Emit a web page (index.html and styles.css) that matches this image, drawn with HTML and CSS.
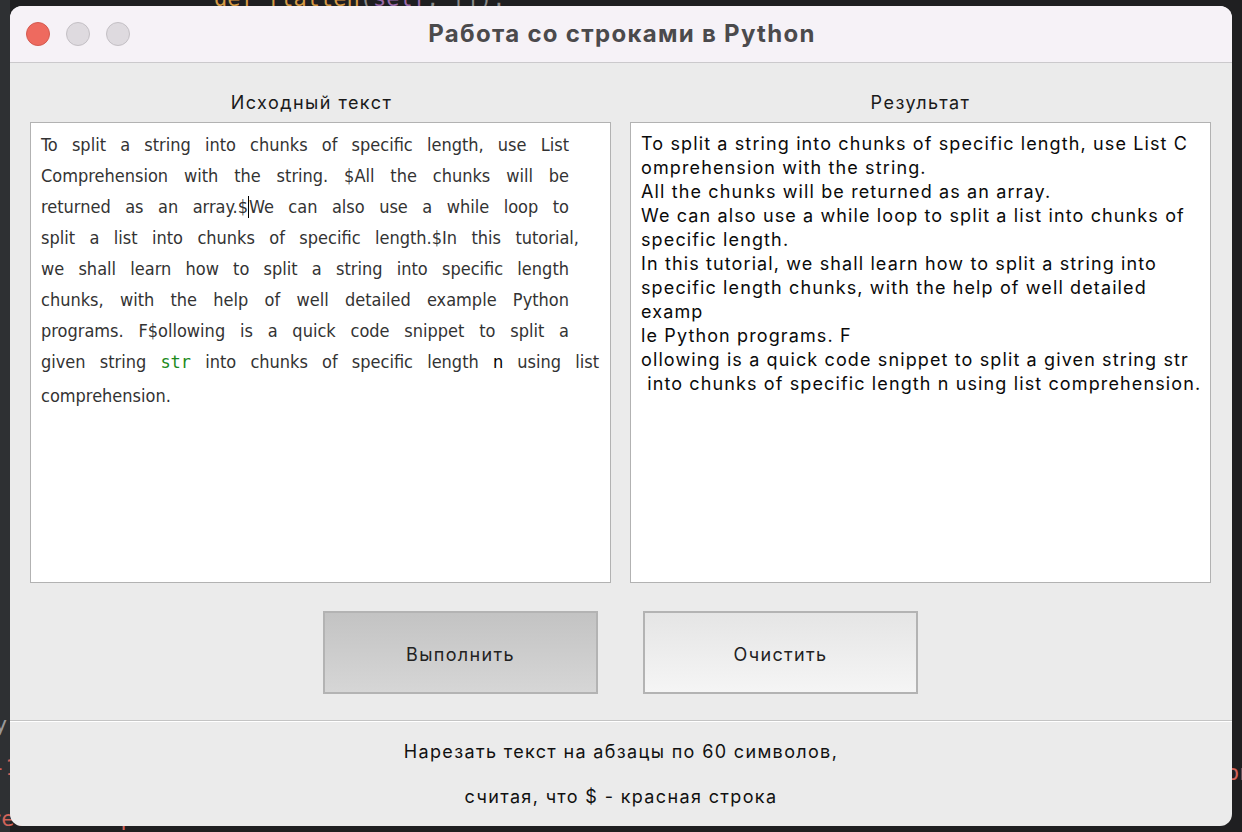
FILE: index.html
```html
<!DOCTYPE html>
<html lang="ru">
<head>
<meta charset="utf-8">
<title>Работа со строками в Python</title>
<link rel="stylesheet" href="styles.css">
</head>
<body>
<div class="desktop">
  <div class="bg-code">
    <div class="code-top"><span class="kw">def</span> <span class="fn">flatten</span>(<span class="self">self</span>, []):</div>
    <div class="code-mid">y-</div>
    <div class="code-red1">-1</div>
    <div class="code-red2">reet skob profile</div>
    <div class="code-right">on</div>
  </div>

  <div class="window">
    <div class="titlebar">
      <div class="lights">
        <span class="light red"></span>
        <span class="light grey"></span>
        <span class="light grey"></span>
      </div>
      <div class="title">Работа со строками в Python</div>
    </div>

    <div class="content">
      <div class="panes">
        <div class="pane">
          <div class="label src">Исходный текст</div>
          <div class="box source">
            <div class="ln">To split a string into chunks of specific length, use List</div>
            <div class="ln">Comprehension with the string. $All the chunks will be</div>
            <div class="ln">returned as an array.$<span class="caret"></span>We can also use a while loop to</div>
            <div class="ln w2">split a list into chunks of specific length.$In this tutorial,</div>
            <div class="ln">we shall learn how to split a string into specific length</div>
            <div class="ln">chunks, with the help of well detailed example Python</div>
            <div class="ln">programs. F$ollowing is a quick code snippet to split a</div>
            <div class="ln w3">given string <span class="code">str</span> into chunks of specific length <span class="blk">n</span> using list</div>
            <div class="ln last">comprehension.</div>
          </div>
        </div>
        <div class="pane">
          <div class="label">Результат</div>
          <div class="box result">
            <div class="rl">To split a string into chunks of specific length, use List C</div>
            <div class="rl">omprehension with the string.</div>
            <div class="rl">All the chunks will be returned as an array.</div>
            <div class="rl">We can also use a while loop to split a list into chunks of</div>
            <div class="rl">specific length.</div>
            <div class="rl">In this tutorial, we shall learn how to split a string into</div>
            <div class="rl">specific length chunks, with the help of well detailed</div>
            <div class="rl">examp</div>
            <div class="rl">le Python programs. F</div>
            <div class="rl">ollowing is a quick code snippet to split a given string str</div>
            <div class="rl"> into chunks of specific length n using list comprehension.</div>
          </div>
        </div>
      </div>

      <div class="buttons">
        <button class="btn run">Выполнить</button>
        <button class="btn clear">Очистить</button>
      </div>
    </div>

    <div class="footer">
      <div class="note">Нарезать текст на абзацы по 60 символов,</div>
      <div class="note">считая, что $ - красная строка</div>
    </div>
  </div>
</div>
</body>
</html>
```

FILE: styles.css
```css
* { box-sizing: border-box; }

html, body {
  margin: 0;
  padding: 0;
  width: 1242px;
  height: 832px;
  overflow: hidden;
  background: #1f1f21;
}

.desktop {
  position: relative;
  width: 1242px;
  height: 832px;
  background: linear-gradient(to right, #2e3033 0, #2e3033 10px, #1f1f21 10px);
  padding: 6px 10px;
}

.bg-code {
  position: absolute;
  inset: 0;
  font-family: "DejaVu Sans Mono", monospace;
  font-size: 22px;
  color: #8a8a8a;
}
.code-top { position: absolute; left: 214px; top: -14px; }
.code-top .kw, .code-top .fn { color: #d59a45; }
.code-top .self { color: #9a6aa8; }
.code-mid { position: absolute; left: -6px; top: 712px; color: #9a9a9a; }
.code-red1 { position: absolute; left: -8px; top: 755px; color: #d0635a; }
.code-red2 { position: absolute; left: -12px; top: 806px; color: #d0635a; }
.code-right { position: absolute; left: 1226px; top: 760px; color: #d0635a; }

.window {
  position: relative;
  width: 1222px;
  height: 820px;
  border-radius: 12px;
  background: #ebebeb;
  overflow: hidden;
  display: flex;
  flex-direction: column;
  font-family: Inter, "Liberation Sans", Arial, sans-serif;
}

.titlebar {
  position: relative;
  height: 57px;
  background: #f6f2f7;
  border-bottom: 1px solid #cbc9cc;
  display: flex;
  align-items: center;
  justify-content: center;
  padding-bottom: 2px;
  flex: none;
}

.lights {
  position: absolute;
  left: 16px;
  top: 16px;
  display: flex;
  gap: 16px;
}
.light {
  width: 24px;
  height: 24px;
  border-radius: 50%;
  display: block;
}
.light.red { background: #ee6a5f; border: 1px solid #d45a50; }
.light.grey { background: #dedadf; border: 1px solid #c4c0c5; }

.title {
  font-family: Inter, Roboto, sans-serif;
  font-weight: 700;
  font-size: 24px;
  letter-spacing: 1.3px;
  color: #4b4a4c;
  margin-left: 2px;
}

.content {
  flex: none;
  padding: 29px 21px 0 20px;
  height: 658px;
  border-bottom: 1px solid #c4c4c4;
  box-shadow: 0 1px 0 #ffffff;
}

.panes {
  display: grid;
  grid-template-columns: 581px 581px;
  column-gap: 19px;
}

.label {
  text-align: center;
  font-size: 18px;
  letter-spacing: 1.45px;
  line-height: 22px;
  color: #1a1a1a;
  margin-bottom: 8px;
}
.label.src { padding-right: 18px; }

.box {
  height: 461px;
  background: #ffffff;
  border: 1px solid #b2b2b2;
}

.source {
  padding: 6px 0 0 10px;
  font-family: "DejaVu Sans", sans-serif;
  font-stretch: semi-condensed;
  font-size: 18px;
  line-height: 31px;
  color: #333333;
}
.source .ln {
  width: 528px;
  text-align: justify;
  text-align-last: justify;
  white-space: nowrap;
}
.source .ln.w2 { width: 538px; }
.source .ln.w3 { width: 558px; }
.source .ln.last { text-align-last: left; line-height: 36px; }
.source .code {
  font-family: "DejaVu Sans Mono", monospace;
  color: #1c8a1c;
  font-size: 17px;
}
.source .blk { color: #000; }
.caret {
  display: inline-block;
  width: 1px;
  height: 22px;
  background: #000;
  vertical-align: -5px;
}

.result {
  padding: 9px 0 0 10px;
  font-size: 18px;
  letter-spacing: 1.12px;
  line-height: 24px;
  color: #0a0a0a;
}
.result .rl { white-space: pre; }

.buttons {
  display: flex;
  justify-content: center;
  gap: 45px;
  margin-top: 28px;
}

.btn {
  width: 275px;
  height: 83px;
  border: 2px solid #b3b3b3;
  border-radius: 0;
  font-family: Inter, "Liberation Sans", Arial, sans-serif;
  font-size: 18px;
  letter-spacing: 1.35px;
  color: #222222;
  padding: 3px 0 0 0;
}
.btn.run { background: linear-gradient(#c3c3c3, #d6d6d6); }
.btn.clear { background: linear-gradient(#e5e5e5, #f5f5f5); }

.footer {
  flex: 1;
  display: flex;
  flex-direction: column;
  align-items: center;
  padding-top: 20px;
  gap: 23px;
}
.note {
  font-size: 18px;
  letter-spacing: 1.35px;
  line-height: 22px;
  color: #111111;
}
```
